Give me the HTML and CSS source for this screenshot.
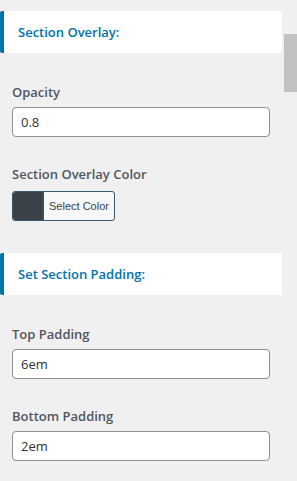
FILE: index.html
```html
<!DOCTYPE html>
<html lang="en">
<head>
    <meta charset="UTF-8">
    <meta name="viewport" content="width=device-width, initial-scale=1.0">
    <title>Section Settings</title>
    <link rel="stylesheet" href="styles.css">
</head>
<body>

<div class="layout">
    <div class="panel">
        <h3 class="section-title">Section Overlay:</h3>

        <div class="control">
            <label class="control-label" for="opacity">Opacity</label>
            <input class="text-input" id="opacity" type="text" value="0.8">
        </div>

        <div class="control control-color">
            <span class="control-label">Section Overlay Color</span>
            <button class="color-result" type="button">
                <span class="color-swatch"></span>
                <span class="color-text">Select Color</span>
            </button>
        </div>

        <h3 class="section-title">Set Section Padding:</h3>

        <div class="control">
            <label class="control-label" for="topPadding">Top Padding</label>
            <input class="text-input" id="topPadding" type="text" value="6em">
        </div>

        <div class="control">
            <label class="control-label" for="bottomPadding">Bottom Padding</label>
            <input class="text-input" id="bottomPadding" type="text" value="2em">
        </div>
    </div>

    <div class="scroll-track">
        <div class="scroll-thumb"></div>
    </div>
</div>

</body>
</html>
```

FILE: styles.css
```css
body {
    margin: 0;
    background-color: #f0f0f1; /* customizer background */
    font-family: "Open Sans", "Noto Sans", sans-serif;
    color: #50575e;
    overflow: hidden;
}

.layout {
    display: flex;
    gap: 2px;
    height: 481px;
}

.panel {
    width: 282px;
    padding-top: 11px;
}

/* section heading with blue bar */
.section-title {
    margin: 0;
    height: 42px;
    line-height: 42px;
    background-color: #ffffff;
    border-left: 4px solid #0073aa;
    border-radius: 2px 0 0 2px;
    padding-left: 14px;
    font-size: 13px;
    font-weight: 600;
    color: #0073aa;
}

.section-title + .control {
    margin-top: 29px;
}

.control {
    padding: 0 12px;
    margin-bottom: 27px;
}

.control-color {
    margin-bottom: 32px;
}

.control-label {
    display: block;
    font-size: 13px;
    font-weight: 600;
    line-height: 20px;
    margin-bottom: 5px;
    color: #50575e;
}

.text-input {
    display: block;
    box-sizing: border-box;
    width: 100%;
    height: 30px;
    margin: 0;
    padding: 0 8px;
    border: 1px solid #8c8f94;
    border-radius: 4px;
    background-color: #ffffff;
    font-family: inherit;
    font-size: 13px;
    color: #2c3338;
    outline: none;
}

/* colour picker button */
.color-result {
    display: flex;
    align-items: stretch;
    height: 30px;
    margin: 7px 0 0;
    padding: 0;
    border: 1px solid #3b5569;
    border-radius: 3px;
    background-color: #f6f7f7;
    overflow: hidden;
    cursor: pointer;
}

.color-swatch {
    width: 30px;
    background-color: #3a4149;
    border-right: 1px solid #3b5569;
}

.color-text {
    display: flex;
    align-items: center;
    padding: 0 5px;
    font-family: inherit;
    font-size: 11px;
    color: #3c434a;
}

.scroll-track {
    width: 13px;
}

.scroll-thumb {
    margin-top: 34px;
    height: 58px;
    background-color: #c1c1c1;
}
```
